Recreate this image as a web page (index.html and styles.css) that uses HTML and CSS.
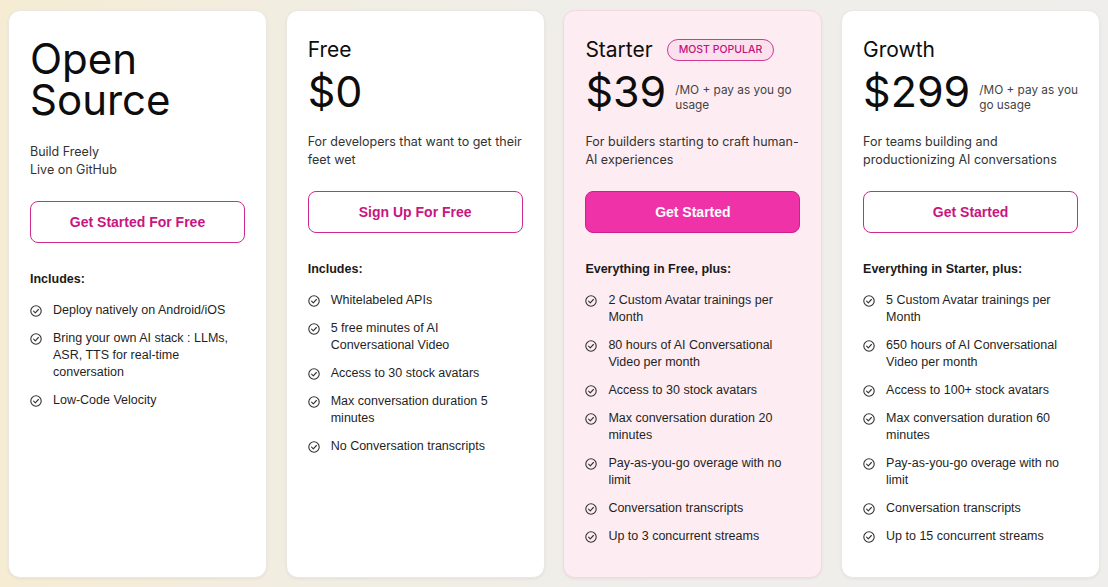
FILE: index.html
```html
<!DOCTYPE html>
<html>
<head>
<meta charset="utf-8">
<link rel="stylesheet" href="styles.css">
</head>
<body>
<div class="plans">
  <div class="card">
    <h1 class="os-title">Open<br>Source</h1>
    <p class="desc">Build Freely<br>Live on GitHub</p>
    <a class="btn">Get Started For Free</a>
    <div class="inc">Includes:</div>
    <ul class="feats">
      <li><svg class="chk" viewBox="0 0 12 12"><circle cx="6" cy="6" r="5.2"/><path d="M3.6 6.2l1.7 1.6 3.1-3.3"/></svg><span>Deploy natively on Android/iOS</span></li>
      <li><svg class="chk" viewBox="0 0 12 12"><circle cx="6" cy="6" r="5.2"/><path d="M3.6 6.2l1.7 1.6 3.1-3.3"/></svg><span>Bring your own AI stack : LLMs, ASR, TTS for real-time conversation</span></li>
      <li><svg class="chk" viewBox="0 0 12 12"><circle cx="6" cy="6" r="5.2"/><path d="M3.6 6.2l1.7 1.6 3.1-3.3"/></svg><span>Low-Code Velocity</span></li>
    </ul>
  </div>

  <div class="card">
    <div class="name-row"><h2 class="name">Free</h2></div>
    <div class="price-row"><span class="price">$0</span></div>
    <p class="desc">For developers that want to get their feet wet</p>
    <a class="btn">Sign Up For Free</a>
    <div class="inc">Includes:</div>
    <ul class="feats">
      <li><svg class="chk" viewBox="0 0 12 12"><circle cx="6" cy="6" r="5.2"/><path d="M3.6 6.2l1.7 1.6 3.1-3.3"/></svg><span>Whitelabeled APIs</span></li>
      <li><svg class="chk" viewBox="0 0 12 12"><circle cx="6" cy="6" r="5.2"/><path d="M3.6 6.2l1.7 1.6 3.1-3.3"/></svg><span>5 free minutes of AI Conversational Video</span></li>
      <li><svg class="chk" viewBox="0 0 12 12"><circle cx="6" cy="6" r="5.2"/><path d="M3.6 6.2l1.7 1.6 3.1-3.3"/></svg><span>Access to 30 stock avatars</span></li>
      <li><svg class="chk" viewBox="0 0 12 12"><circle cx="6" cy="6" r="5.2"/><path d="M3.6 6.2l1.7 1.6 3.1-3.3"/></svg><span>Max conversation duration 5 minutes</span></li>
      <li><svg class="chk" viewBox="0 0 12 12"><circle cx="6" cy="6" r="5.2"/><path d="M3.6 6.2l1.7 1.6 3.1-3.3"/></svg><span>No Conversation transcripts</span></li>
    </ul>
  </div>

  <div class="card popular">
    <div class="name-row"><h2 class="name">Starter</h2><span class="badge">MOST POPULAR</span></div>
    <div class="price-row"><span class="price">$39</span><span class="per">/MO + pay as you go usage</span></div>
    <p class="desc">For builders starting to craft human-AI experiences</p>
    <a class="btn filled">Get Started</a>
    <div class="inc">Everything in Free, plus:</div>
    <ul class="feats">
      <li><svg class="chk" viewBox="0 0 12 12"><circle cx="6" cy="6" r="5.2"/><path d="M3.6 6.2l1.7 1.6 3.1-3.3"/></svg><span>2 Custom Avatar trainings per Month</span></li>
      <li><svg class="chk" viewBox="0 0 12 12"><circle cx="6" cy="6" r="5.2"/><path d="M3.6 6.2l1.7 1.6 3.1-3.3"/></svg><span>80 hours of AI Conversational Video per month</span></li>
      <li><svg class="chk" viewBox="0 0 12 12"><circle cx="6" cy="6" r="5.2"/><path d="M3.6 6.2l1.7 1.6 3.1-3.3"/></svg><span>Access to 30 stock avatars</span></li>
      <li><svg class="chk" viewBox="0 0 12 12"><circle cx="6" cy="6" r="5.2"/><path d="M3.6 6.2l1.7 1.6 3.1-3.3"/></svg><span>Max conversation duration 20 minutes</span></li>
      <li><svg class="chk" viewBox="0 0 12 12"><circle cx="6" cy="6" r="5.2"/><path d="M3.6 6.2l1.7 1.6 3.1-3.3"/></svg><span>Pay-as-you-go overage with no limit</span></li>
      <li><svg class="chk" viewBox="0 0 12 12"><circle cx="6" cy="6" r="5.2"/><path d="M3.6 6.2l1.7 1.6 3.1-3.3"/></svg><span>Conversation transcripts</span></li>
      <li><svg class="chk" viewBox="0 0 12 12"><circle cx="6" cy="6" r="5.2"/><path d="M3.6 6.2l1.7 1.6 3.1-3.3"/></svg><span>Up to 3 concurrent streams</span></li>
    </ul>
  </div>

  <div class="card">
    <div class="name-row"><h2 class="name">Growth</h2></div>
    <div class="price-row"><span class="price">$299</span><span class="per">/MO + pay as you go usage</span></div>
    <p class="desc">For teams building and productionizing AI conversations</p>
    <a class="btn">Get Started</a>
    <div class="inc">Everything in Starter, plus:</div>
    <ul class="feats">
      <li><svg class="chk" viewBox="0 0 12 12"><circle cx="6" cy="6" r="5.2"/><path d="M3.6 6.2l1.7 1.6 3.1-3.3"/></svg><span>5 Custom Avatar trainings per Month</span></li>
      <li><svg class="chk" viewBox="0 0 12 12"><circle cx="6" cy="6" r="5.2"/><path d="M3.6 6.2l1.7 1.6 3.1-3.3"/></svg><span>650 hours of AI Conversational Video per month</span></li>
      <li><svg class="chk" viewBox="0 0 12 12"><circle cx="6" cy="6" r="5.2"/><path d="M3.6 6.2l1.7 1.6 3.1-3.3"/></svg><span>Access to 100+ stock avatars</span></li>
      <li><svg class="chk" viewBox="0 0 12 12"><circle cx="6" cy="6" r="5.2"/><path d="M3.6 6.2l1.7 1.6 3.1-3.3"/></svg><span>Max conversation duration 60 minutes</span></li>
      <li><svg class="chk" viewBox="0 0 12 12"><circle cx="6" cy="6" r="5.2"/><path d="M3.6 6.2l1.7 1.6 3.1-3.3"/></svg><span>Pay-as-you-go overage with no limit</span></li>
      <li><svg class="chk" viewBox="0 0 12 12"><circle cx="6" cy="6" r="5.2"/><path d="M3.6 6.2l1.7 1.6 3.1-3.3"/></svg><span>Conversation transcripts</span></li>
      <li><svg class="chk" viewBox="0 0 12 12"><circle cx="6" cy="6" r="5.2"/><path d="M3.6 6.2l1.7 1.6 3.1-3.3"/></svg><span>Up to 15 concurrent streams</span></li>
    </ul>
  </div>
</div>
</body>
</html>
```

FILE: styles.css
```css
* { box-sizing: border-box; }
html, body { margin: 0; height: 100%; }
body {
  width: 1108px;
  height: 587px;
  overflow: hidden;
  background: linear-gradient(90deg, #f5ecd3 0%, #f1ede3 30%, #efeeeb 60%, #efeeec 100%);
  font-family: Inter, "Liberation Sans", sans-serif;
  color: #111;
}
.plans {
  display: grid;
  grid-template-columns: repeat(4, 259px);
  column-gap: 18.7px;
  padding: 10px 8px 9px 8px;
  height: 587px;
}
.card {
  background: #fff;
  border: 1px solid #ebe8e4;
  border-radius: 12px;
  box-shadow: 0 1px 3px rgba(0,0,0,0.06);
  padding: 26px 21px 20px 21px;
  display: flex;
  flex-direction: column;
}
.card.popular {
  background: #fdedf2;
  border-color: #f2d9e0;
}
.os-title {
  margin: 1px 0 0 0;
  font-size: 42px;
  font-weight: 400;
  line-height: 41px;
  color: #0d0d0d;
}
.name-row {
  display: flex;
  align-items: center;
  gap: 14px;
  height: 26px;
}
.name {
  margin: 0;
  font-size: 21px;
  font-weight: 400;
  line-height: 26px;
  color: #0d0d0d;
}
.badge {
  border: 1px solid #d4388f;
  background: #fbe0ed;
  color: #c3127c;
  border-radius: 11px;
  font-size: 10.5px;
  font-weight: 500;
  line-height: 20px;
  padding: 0 11px;
}
.price-row {
  display: flex;
  align-items: flex-start;
  gap: 9px;
  margin-top: 4px;
  height: 48px;
}
.price {
  font-size: 43px;
  line-height: 48px;
  font-weight: 400;
  color: #0d0d0d;
  white-space: nowrap;
}
.per {
  flex: 1;
  font-size: 11.8px;
  line-height: 15px;
  color: #444;
  margin-top: 16px;
}
.desc {
  margin: 18px 0 0 0;
  font-size: 12.5px;
  line-height: 18px;
  color: #333;
}
.os-title + .desc { margin-top: 23px; }
.btn {
  display: block;
  margin-top: 22px;
  height: 42px;
  border: 1px solid #cf2a8d;
  border-radius: 8px;
  text-align: center;
  line-height: 40px;
  font-family: "Liberation Sans", Arial, sans-serif;
  font-weight: 700;
  font-size: 14px;
  color: #c8157f;
}
.btn.filled {
  background: #f032a8;
  border-color: #cf1f8d;
  color: #fff;
}
.inc {
  margin-top: 28px;
  font-family: "Liberation Sans", Arial, sans-serif;
  font-weight: 700;
  font-size: 12.5px;
  line-height: 17px;
  color: #1a1a1a;
}
.feats {
  list-style: none;
  margin: 14px 0 0 0;
  padding: 0;
  display: flex;
  flex-direction: column;
  gap: 11px;
}
.feats li {
  display: flex;
  align-items: flex-start;
  gap: 11px;
  font-family: "Liberation Sans", Arial, sans-serif;
  font-size: 12.5px;
  line-height: 17px;
  color: #1f1f1f;
}
.chk {
  flex: none;
  width: 12px;
  height: 12px;
  margin-top: 3px;
  fill: none;
  stroke: #333;
  stroke-width: 1.1;
  stroke-linecap: round;
  stroke-linejoin: round;
}
```
